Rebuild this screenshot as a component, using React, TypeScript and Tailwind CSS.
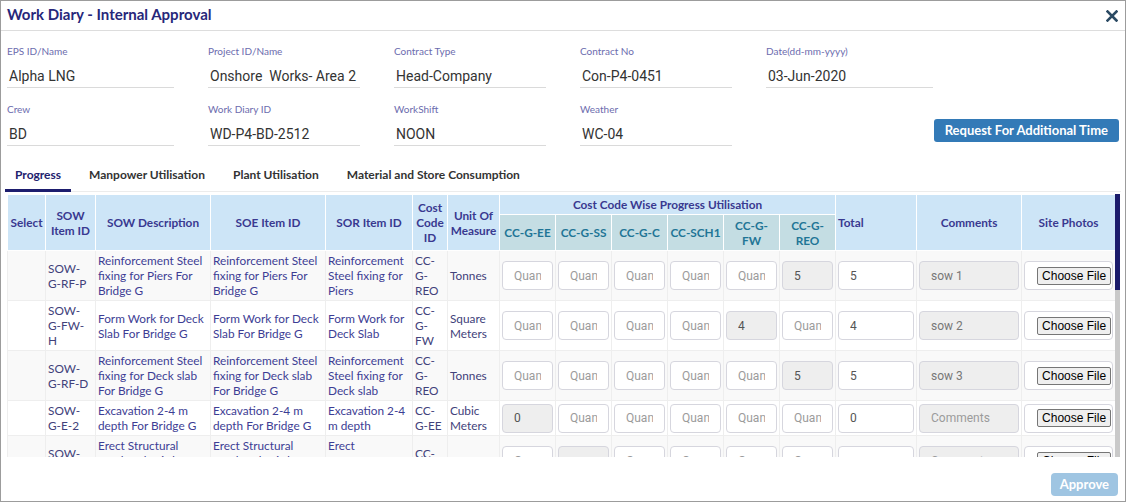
import React from "react";

type Row = {
  id: string;
  desc: string;
  soe: string;
  sor: string;
  cc: string;
  unit: string;
  qty: (string | null)[];
  total: string;
  comment: string;
};

const topFields = [
  { label: "EPS ID/Name", value: "Alpha LNG", w: "w-[167px]" },
  { label: "Project ID/Name", value: "Onshore  Works- Area 2", w: "w-[152px]" },
  { label: "Contract Type", value: "Head-Company", w: "w-[152px]" },
  { label: "Contract No", value: "Con-P4-0451", w: "w-[152px]" },
  { label: "Date(dd-mm-yyyy)", value: "03-Jun-2020", w: "w-[167px]" },
];

const secondFields = [
  { label: "Crew", value: "BD", w: "w-[167px]" },
  { label: "Work Diary ID", value: "WD-P4-BD-2512", w: "w-[152px]" },
  { label: "WorkShift", value: "NOON", w: "w-[152px]" },
  { label: "Weather", value: "WC-04", w: "w-[152px]" },
];

const tabs = ["Progress", "Manpower Utilisation", "Plant Utilisation", "Material and Store Consumption"];

const costCodes = ["CC-G-EE", "CC-G-SS", "CC-G-C", "CC-SCH1", "CC-G-FW", "CC-G-REO"];

const rows: Row[] = [
  {
    id: "SOW-G-RF-P",
    desc: "Reinforcement Steel fixing for Piers For Bridge G",
    soe: "Reinforcement Steel fixing for Piers For Bridge G",
    sor: "Reinforcement Steel fixing for Piers",
    cc: "CC-G-REO",
    unit: "Tonnes",
    qty: [null, null, null, null, null, "5"],
    total: "5",
    comment: "sow 1",
  },
  {
    id: "SOW-G-FW-H",
    desc: "Form Work for Deck Slab For Bridge G",
    soe: "Form Work for Deck Slab For Bridge G",
    sor: "Form Work for Deck Slab",
    cc: "CC-G-FW",
    unit: "Square Meters",
    qty: [null, null, null, null, "4", null],
    total: "4",
    comment: "sow 2",
  },
  {
    id: "SOW-G-RF-D",
    desc: "Reinforcement Steel fixing for Deck slab For Bridge G",
    soe: "Reinforcement Steel fixing for Deck slab For Bridge G",
    sor: "Reinforcement Steel fixing for Deck slab",
    cc: "CC-G-REO",
    unit: "Tonnes",
    qty: [null, null, null, null, null, "5"],
    total: "5",
    comment: "sow 3",
  },
  {
    id: "SOW-G-E-2",
    desc: "Excavation 2-4 m depth For Bridge G",
    soe: "Excavation 2-4 m depth For Bridge G",
    sor: "Excavation 2-4 m depth",
    cc: "CC-G-EE",
    unit: "Cubic Meters",
    qty: ["0", null, null, null, null, null],
    total: "0",
    comment: "",
  },
  {
    id: "SOW-G-SS-G",
    desc: "Erect Structural Steelwork Girders For Bridge G",
    soe: "Erect Structural Steelwork Girders For Bridge G",
    sor: "Erect Superstructure Steel Girders",
    cc: "CC-G-SS",
    unit: "Tonnes",
    qty: [null, "", null, null, null, null],
    total: "",
    comment: "",
  },
];

const inputBase =
  "h-[29px] w-full rounded-[4px] border border-[#d6d6de] px-[11px] font-['Roboto',sans-serif] text-[12px] text-[#555] outline-none placeholder:text-[#9b9b9b]";

const Field = ({ label, value, w }: { label: string; value: string; w: string }) => (
  <div className={w}>
    <div className="text-[10px] leading-[12px] text-[#6c6cae]">{label}</div>
    <div className="mt-[5px] h-[26px] whitespace-pre border-b border-[#dadada] pl-[2px] font-['Roboto',sans-serif] text-[14px] leading-[29px] text-[#333]">
      {value}
    </div>
  </div>
);

export default function App() {
  return (
    <div className="flex h-[502px] w-[1126px] flex-col border border-[#9c9c9c] bg-white font-['Lato',sans-serif]">
      {/* header */}
      <div className="flex h-[30px] shrink-0 items-center justify-between border-b border-[#dddddd] pb-[2px] pl-[6px] pr-[7px]">
        <span className="text-[15px] font-bold text-[#27277a]">Work Diary - Internal Approval</span>
        <svg width="12" height="12" viewBox="0 0 12 12" className="mt-[3px]">
          <path d="M1.5 1.5l9 9M10.5 1.5l-9 9" stroke="#2b4a63" strokeWidth="2.6" strokeLinecap="square" />
        </svg>
      </div>

      {/* form */}
      <div className="grid shrink-0 grid-cols-[201px_186px_186px_186px_1fr] gap-y-[15px] pl-[6px] pr-[6px] pt-[14px]">
        {topFields.map((f) => (
          <Field key={f.label} {...f} />
        ))}
        {secondFields.map((f) => (
          <Field key={f.label} {...f} />
        ))}
        <div className="flex justify-end pt-[16px]">
          <button className="h-[23px] whitespace-nowrap rounded-[3px] bg-[#337ab7] px-[11px] text-[13px] font-bold text-white">
            Request For Additional Time
          </button>
        </div>
      </div>

      {/* tabs */}
      <div className="mx-[4px] mt-[12px] flex shrink-0 gap-[8px] border-b border-[#ececec]">
        {tabs.map((t, i) => (
          <div
            key={t}
            className={`-mb-px border-b-[3px] px-[10px] pb-[7px] pt-[10px] text-[12px] font-bold leading-[14px] ${
              i === 0 ? "border-[#1d1d6e] text-[#22226e]" : "border-transparent text-[#333]"
            }`}
          >
            {t}
          </div>
        ))}
      </div>

      {/* table with its scrollbar */}
      <div className="ml-[6px] mt-[2px] flex h-[263px] w-[1113px] shrink-0">
        <div className="w-[1108px] overflow-hidden">
          <table className="w-[1108px] table-fixed border-collapse text-[11.8px] leading-[15px]">
            <colgroup>
              <col className="w-[38px]" />
              <col className="w-[50px]" />
              <col className="w-[115px]" />
              <col className="w-[115px]" />
              <col className="w-[87px]" />
              <col className="w-[35px]" />
              <col className="w-[52px]" />
              {costCodes.map((c) => (
                <col key={c} className="w-[56px]" />
              ))}
              <col className="w-[81px]" />
              <col className="w-[105px]" />
              <col className="w-[94px]" />
            </colgroup>
            <thead>
              <tr className="h-[20px] bg-[#cde5f7] font-bold text-[#393990]">
                <th rowSpan={2} className="border border-white px-[1px]">Select</th>
                <th rowSpan={2} className="border border-white px-[2px]">SOW Item ID</th>
                <th rowSpan={2} className="border border-white">SOW Description</th>
                <th rowSpan={2} className="border border-white">SOE Item ID</th>
                <th rowSpan={2} className="border border-white">SOR Item ID</th>
                <th rowSpan={2} className="border border-white">Cost Code ID</th>
                <th rowSpan={2} className="border border-white">Unit Of Measure</th>
                <th colSpan={6} className="border border-white">Cost Code Wise Progress Utilisation</th>
                <th rowSpan={2} className="border border-white px-[2px] text-left">Total</th>
                <th rowSpan={2} className="border border-white">Comments</th>
                <th rowSpan={2} className="border border-white">Site Photos</th>
              </tr>
              <tr className="h-[36px] bg-[#c4dde3] font-semibold text-[#1f7596]">
                {costCodes.map((c) => (
                  <th key={c} className="border border-white px-[2px]">
                    {c}
                  </th>
                ))}
              </tr>
            </thead>
            <tbody>
              {rows.map((r, i) => (
                <tr key={r.id} className={i % 2 === 0 ? "bg-[#f9f9f9]" : "bg-white"}>
                  <td className="border border-[#eeeeee]" />
                  <td className="border border-[#eeeeee] py-[2px] pl-[2px] pr-[5px] text-[#41417a]">{r.id}</td>
                  <td className="border border-[#eeeeee] px-[2px] py-[2px] text-[#3d3d94]">{r.desc}</td>
                  <td className="border border-[#eeeeee] px-[2px] py-[2px] text-[#3d3d94]">{r.soe}</td>
                  <td className="border border-[#eeeeee] px-[2px] py-[2px] text-[#3d3d94]">{r.sor}</td>
                  <td className="border border-[#eeeeee] px-[2px] py-[2px] text-[#41417a]">{r.cc}</td>
                  <td className="border border-[#eeeeee] px-[2px] py-[2px] text-[#41417a]">{r.unit}</td>
                  {r.qty.map((q, j) => (
                    <td key={j} className="border border-[#eeeeee] px-[2px] py-[2px]">
                      {q === null ? (
                        <input readOnly placeholder="Quan" className={`${inputBase} bg-white`} />
                      ) : (
                        <input readOnly value={q} className={`${inputBase} bg-[#eeeeee]`} />
                      )}
                    </td>
                  ))}
                  <td className="border border-[#eeeeee] px-[2px] py-[2px]">
                    <input readOnly value={r.total} className={`${inputBase} bg-white`} />
                  </td>
                  <td className="border border-[#eeeeee] px-[2px] py-[2px]">
                    <input
                      readOnly
                      value={r.comment}
                      placeholder="Comments"
                      className={`${inputBase} bg-[#eeeeee] text-[#777]`}
                    />
                  </td>
                  <td className="border border-[#eeeeee] px-[2px] py-[2px]">
                    <div className="flex h-[29px] items-center overflow-hidden rounded-[4px] border border-[#d6d6de] bg-white pl-[12px]">
                      <button className="h-[18px] whitespace-nowrap rounded-[2px] border border-[#767676] bg-[#efefef] px-[4px] font-['Liberation_Sans',Arial,sans-serif] text-[12px] leading-[16px] text-black">
                        Choose File
                      </button>
                    </div>
                  </td>
                </tr>
              ))}
            </tbody>
          </table>
        </div>
        <div className="flex w-[5px] flex-col bg-[#c9c9c9]">
          <div className="h-[96px] bg-[#1b1b6b]" />
        </div>
      </div>

      {/* footer */}
      <div className="mt-[16px] flex shrink-0 justify-end pr-[7px]">
        <button className="h-[23px] rounded-[4px] bg-[#9fc5e2] px-[9px] text-[13px] font-bold text-white">Approve</button>
      </div>
    </div>
  );
}
